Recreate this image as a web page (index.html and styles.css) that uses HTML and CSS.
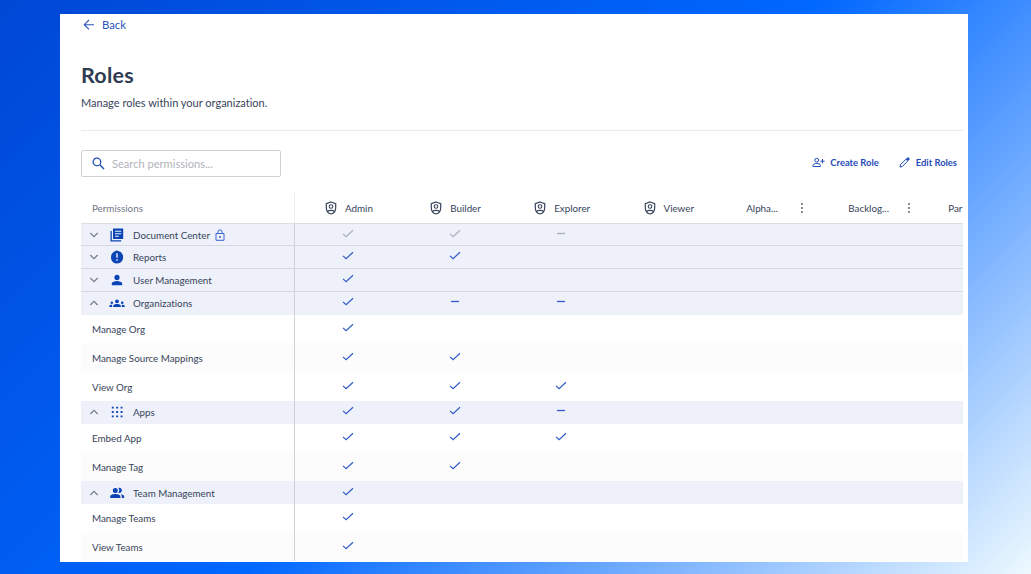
FILE: index.html
```
<!DOCTYPE html>
<html lang="en">

<head>
    <meta charset="UTF-8">
    <meta name="viewport" content="width=device-width, initial-scale=1.0">
    <title>Roles</title>
    <link rel="stylesheet" href="styles.css">
</head>

<body>
    <svg class="sprite">
        <symbol id="check" viewBox="0 0 12 9"><path d="M1 4.9 4.1 7.7 11 1.2" fill="none" stroke="currentColor" stroke-width="1.2"/></symbol>
        <symbol id="dash" viewBox="0 0 12 9"><path d="M2 4.5h8" fill="none" stroke="currentColor" stroke-width="1.3"/></symbol>
        <symbol id="down" viewBox="0 0 10 8"><path d="M1.3 2 5 5.7 8.7 2" fill="none" stroke="currentColor" stroke-width="1.2"/></symbol>
        <symbol id="up" viewBox="0 0 10 8"><path d="M1.3 6 5 2.3 8.7 6" fill="none" stroke="currentColor" stroke-width="1.2"/></symbol>
        <symbol id="shield" viewBox="0 0 12 14"><path d="M6 1 10.7 2.6V6.7C10.7 9.8 8.8 12.2 6 13 3.2 12.2 1.3 9.8 1.3 6.7V2.6Z M2.5 10.2C4.3 9 7.7 9 9.5 10.2" fill="none" stroke="currentColor" stroke-width="1.2"/><circle cx="6" cy="5.5" r="1.8" fill="none" stroke="currentColor" stroke-width="1.1"/></symbol>
        <symbol id="dots" viewBox="0 0 4 12"><g fill="currentColor"><circle cx="2" cy="2" r=".9"/><circle cx="2" cy="6" r=".9"/><circle cx="2" cy="10" r=".9"/></g></symbol>
    </svg>
    <div class="panel">
        <a class="back">
            <svg width="12" height="12" viewBox="0 0 12 12"><path d="M11 5.7H1.5M6 1 1.3 5.7 6 10.4" fill="none" stroke="currentColor" stroke-width="1.1"/></svg>
            <span>Back</span>
        </a>
        <h1>Roles</h1>
        <p class="desc">Manage roles within your organization.</p>
        <div class="toolbar">
            <div class="search">
                <svg width="13" height="13" viewBox="0 0 13 13"><circle cx="4.9" cy="4.9" r="3.8" fill="none" stroke="currentColor" stroke-width="1.2"/><path d="m7.8 7.8 4.2 4.2" stroke="currentColor" stroke-width="1.4"/></svg>
                <span>Search permissions...</span>
            </div>
            <div class="actions">
                <a class="create">
                    <svg width="13" height="11" viewBox="0 0 13 11"><g fill="none" stroke="currentColor"><circle cx="4.7" cy="3.2" r="1.9"/><path d="M1 9.5V8.4C1 7 3.2 6.4 4.7 6.4S8.4 7 8.4 8.4V9.5ZM8.4 4.2h4.2M10.5 2.1v4.2"/></g></svg>
                    <span>Create Role</span>
                </a>
                <a class="edit">
                    <svg width="11" height="11" viewBox="0 0 11 11"><path d="m1 10 .4-2.2L7 2.2 8.8 4 3.2 9.6Z" fill="none" stroke="currentColor"/><path d="M6.9 2 8.5.4Q9 0 9.5.5l1 1q.5.5 0 1L9 4.1Z" fill="currentColor"/></svg>
                    <span>Edit Roles</span>
                </a>
            </div>
        </div>
        <div class="table">
            <div class="row head">
                <div class="name">Permissions</div>
                <div class="role"><svg><use href="#shield"/></svg><span>Admin</span></div>
                <div class="role"><svg><use href="#shield"/></svg><span>Builder</span></div>
                <div class="role"><svg><use href="#shield"/></svg><span>Explorer</span></div>
                <div class="role"><svg><use href="#shield"/></svg><span>Viewer</span></div>
                <div class="role custom"><span>Alpha...</span><svg><use href="#dots"/></svg></div>
                <div class="role custom"><span>Backlog...</span><svg><use href="#dots"/></svg></div>
                <div class="role last"><span>Par</span></div>
            </div>
            <div class="row group line locked">
                <div class="name">
                    <svg class="arrow"><use href="#down"/></svg>
                    <svg class="icon" viewBox="0 0 16 16"><path d="M4 1.5h10.2V12H4ZM1.5 4h1.3v9.2h9.4v1.3H1.5Z" fill="currentColor"/><path d="M6 4.2h6.2M6 6.7h6.2M6 9.2h3.8" stroke="#eef1fa" stroke-width="1.1"/></svg>
                    <span>Document Center</span>
                    <svg class="lock" viewBox="0 0 10 12"><path d="M1 4.5h8v6.8H1ZM2.9 4.5V3a2.1 2.1 0 0 1 4.2 0v1.5" fill="none" stroke="currentColor"/><circle cx="5" cy="7.9" r="1" fill="currentColor"/></svg>
                </div>
                <div class="cell"><svg><use href="#check"/></svg></div>
                <div class="cell"><svg><use href="#check"/></svg></div>
                <div class="cell"><svg><use href="#dash"/></svg></div>
            </div>
            <div class="row group line">
                <div class="name">
                    <svg class="arrow"><use href="#down"/></svg>
                    <svg class="icon" viewBox="0 0 16 16"><path d="m8 1.6 1.9.6 1.9.8 1.3 1.7.9 1.7.1 1.9-.3 2-.8 1.8-1.5 1.4-1.8.8-1.9.3-1.9-.3-1.6-.9L3 11.9 2.1 10 2 8l.3-1.9 1-1.8 1.3-1.4L6.2 2Z" fill="currentColor"/><path d="M8 4.3v4.5M8 10.2v1.5" stroke="#eef1fa" stroke-width="1.4"/></svg>
                    <span>Reports</span>
                </div>
                <div class="cell"><svg><use href="#check"/></svg></div>
                <div class="cell"><svg><use href="#check"/></svg></div>
            </div>
            <div class="row group line">
                <div class="name">
                    <svg class="arrow"><use href="#down"/></svg>
                    <svg class="icon" viewBox="0 0 16 16"><path d="M8 2.8a2.6 2.6 0 1 1 0 5.2 2.6 2.6 0 0 1 0-5.2ZM2.8 13.3v-1.5C2.8 10 6.2 9.1 8 9.1s5.2.9 5.2 2.7v1.5Z" fill="currentColor"/></svg>
                    <span>User Management</span>
                </div>
                <div class="cell"><svg><use href="#check"/></svg></div>
            </div>
            <div class="row group">
                <div class="name">
                    <svg class="arrow"><use href="#up"/></svg>
                    <svg class="icon" viewBox="0 0 16 16"><g fill="currentColor"><circle cx="8" cy="6.3" r="1.9"/><circle cx="2.8" cy="7.7" r="1.3"/><circle cx="13.2" cy="7.7" r="1.3"/><path d="M4.2 12v-1.2C4.2 9.4 6.5 8.9 8 8.9s3.8.5 3.8 1.9V12ZM.3 12v-1c0-1 1.5-1.4 3-1.3-.3.6-.2 1.5-.2 2.3ZM15.7 12v-1c0-1-1.5-1.4-3-1.3.3.6.2 1.5.2 2.3Z"/></g></svg>
                    <span>Organizations</span>
                </div>
                <div class="cell"><svg><use href="#check"/></svg></div>
                <div class="cell"><svg><use href="#dash"/></svg></div>
                <div class="cell"><svg><use href="#dash"/></svg></div>
            </div>
            <div class="row">
                <div class="name">Manage Org</div>
                <div class="cell"><svg><use href="#check"/></svg></div>
            </div>
            <div class="row gray">
                <div class="name">Manage Source Mappings</div>
                <div class="cell"><svg><use href="#check"/></svg></div>
                <div class="cell"><svg><use href="#check"/></svg></div>
            </div>
            <div class="row">
                <div class="name">View Org</div>
                <div class="cell"><svg><use href="#check"/></svg></div>
                <div class="cell"><svg><use href="#check"/></svg></div>
                <div class="cell"><svg><use href="#check"/></svg></div>
            </div>
            <div class="row group">
                <div class="name">
                    <svg class="arrow"><use href="#up"/></svg>
                    <svg class="icon" viewBox="0 0 16 16"><path d="M2.8 3.6h11M2.8 8h11M2.8 12.4h11" stroke="currentColor" stroke-width="1.9" stroke-dasharray="1.9 2.5"/></svg>
                    <span>Apps</span>
                </div>
                <div class="cell"><svg><use href="#check"/></svg></div>
                <div class="cell"><svg><use href="#check"/></svg></div>
                <div class="cell"><svg><use href="#dash"/></svg></div>
            </div>
            <div class="row">
                <div class="name">Embed App</div>
                <div class="cell"><svg><use href="#check"/></svg></div>
                <div class="cell"><svg><use href="#check"/></svg></div>
                <div class="cell"><svg><use href="#check"/></svg></div>
            </div>
            <div class="row gray">
                <div class="name">Manage Tag</div>
                <div class="cell"><svg><use href="#check"/></svg></div>
                <div class="cell"><svg><use href="#check"/></svg></div>
            </div>
            <div class="row group">
                <div class="name">
                    <svg class="arrow"><use href="#up"/></svg>
                    <svg class="icon" viewBox="0 0 16 16"><path d="M6.3 2.9a2.5 2.5 0 1 1 0 5 2.5 2.5 0 0 1 0-5ZM1.2 13v-1.6C1.2 9.7 4.5 9 6.3 9s5.1.7 5.1 2.4V13ZM9.3 7.7a3.6 3.6 0 0 0 0-4.6c1.8-.8 3.6.5 3.6 2.3S11.1 8.5 9.3 7.7ZM11.6 9.3c1.9.2 3.6.9 3.6 2.2V13h-2.4v-1.5c0-.9-.5-1.6-1.2-2.2Z" fill="currentColor"/></svg>
                    <span>Team Management</span>
                </div>
                <div class="cell"><svg><use href="#check"/></svg></div>
            </div>
            <div class="row">
                <div class="name">Manage Teams</div>
                <div class="cell"><svg><use href="#check"/></svg></div>
            </div>
            <div class="row gray">
                <div class="name">View Teams</div>
                <div class="cell"><svg><use href="#check"/></svg></div>
            </div>
        </div>
    </div>
</body>

</html>
```
FILE: styles.css
```
* {
    margin: 0;
    padding: 0;
    box-sizing: border-box;
}

body {
    height: 574px;
    padding: 14px 63px 12px 60px;
    overflow: hidden;
    font-family: Lato, sans-serif;
    font-variant-ligatures: none;
    color: #37445a;
    background: linear-gradient(135deg, #0047d5 0%, #0067ff 51%, #72adff 75%, #edf9fe 100%);
}

.sprite {
    display: none;
}

svg {
    flex: none;
}

.panel {
    height: 548px;
    padding: 4px 5px 0 21px;
    background: #fff;
    overflow: hidden;
}

.back {
    display: flex;
    align-items: center;
    gap: 7px;
    height: 14px;
    padding-left: 2px;
    font-size: 11.3px;
    color: #2a54bf;
}

.back span {
    padding-bottom: 2px;
}

h1 {
    margin-top: 29px;
    height: 28px;
    line-height: 28px;
    font-size: 21.5px;
    font-weight: 700;
    letter-spacing: .25px;
    color: #2f3c53;
}

.desc {
    margin-top: 6px;
    height: 16px;
    line-height: 16px;
    font-size: 11px;
}

.toolbar {
    display: flex;
    justify-content: space-between;
    margin-top: 19px;
    height: 63px;
    padding: 19px 6px 0 0;
    border-top: 1px solid #e9eaec;
}

.search {
    display: flex;
    align-items: center;
    gap: 7px;
    width: 200px;
    height: 27px;
    padding-left: 10px;
    border: 1px solid #cfd1d5;
    border-radius: 2px;
    font-size: 11.1px;
    color: #b1b4bc;
}

.search svg {
    color: #1f4bb8;
}

.actions {
    display: flex;
    gap: 20px;
    height: 24px;
    font-size: 9.4px;
    font-weight: 700;
    color: #1f4bb8;
}

.actions a {
    display: flex;
    align-items: center;
    gap: 5px;
}

.actions .edit {
    gap: 6px;
}

.table {
    width: 882px;
    overflow: hidden;
    font-size: 9.8px;
}

.row {
    display: grid;
    grid-template-columns: 213.7px repeat(7, 106.6px);
    height: 28.75px;
}

.row.head {
    height: 30.7px;
    border-bottom: 1px solid #dcdee3;
}

.row.group {
    height: 22.75px;
    background: #eef1fa;
}

.row.line {
    border-bottom: 1px solid #d5d9e3;
}

.row.gray {
    background: #fcfcfc;
}

.name {
    display: flex;
    align-items: center;
    padding-left: 11px;
    border-right: 1px solid #cfd2d9;
}

.head .name {
    color: #6f7888;
    border-color: #eceded;
}

.group .name {
    padding-left: 8px;
}

.arrow {
    width: 10px;
    height: 8px;
    margin-right: 10px;
    color: #757c89;
}

.icon {
    width: 16px;
    height: 16px;
    margin-right: 8px;
    color: #0b45b5;
}

.lock {
    width: 10px;
    height: 12px;
    margin-left: 5px;
    color: #3b66cf;
}

.role {
    display: flex;
    align-items: center;
    justify-content: center;
    gap: 8px;
    padding-left: 2px;
}

.role svg {
    width: 12px;
    height: 14px;
}

.role.custom {
    justify-content: flex-start;
    padding-left: 10px;
}

.custom span {
    width: 62px;
    text-align: center;
}

.custom svg {
    width: 4px;
    height: 12px;
    margin-left: -1px;
    color: #4d5768;
}

.role.last {
    justify-content: flex-start;
    padding-left: 14px;
}

.cell {
    display: flex;
    align-items: center;
    justify-content: center;
    padding-bottom: 3px;
    color: #2f5ac8;
}

.cell svg {
    width: 12px;
    height: 9px;
}

.locked .cell {
    color: #a9aebb;
}
```
